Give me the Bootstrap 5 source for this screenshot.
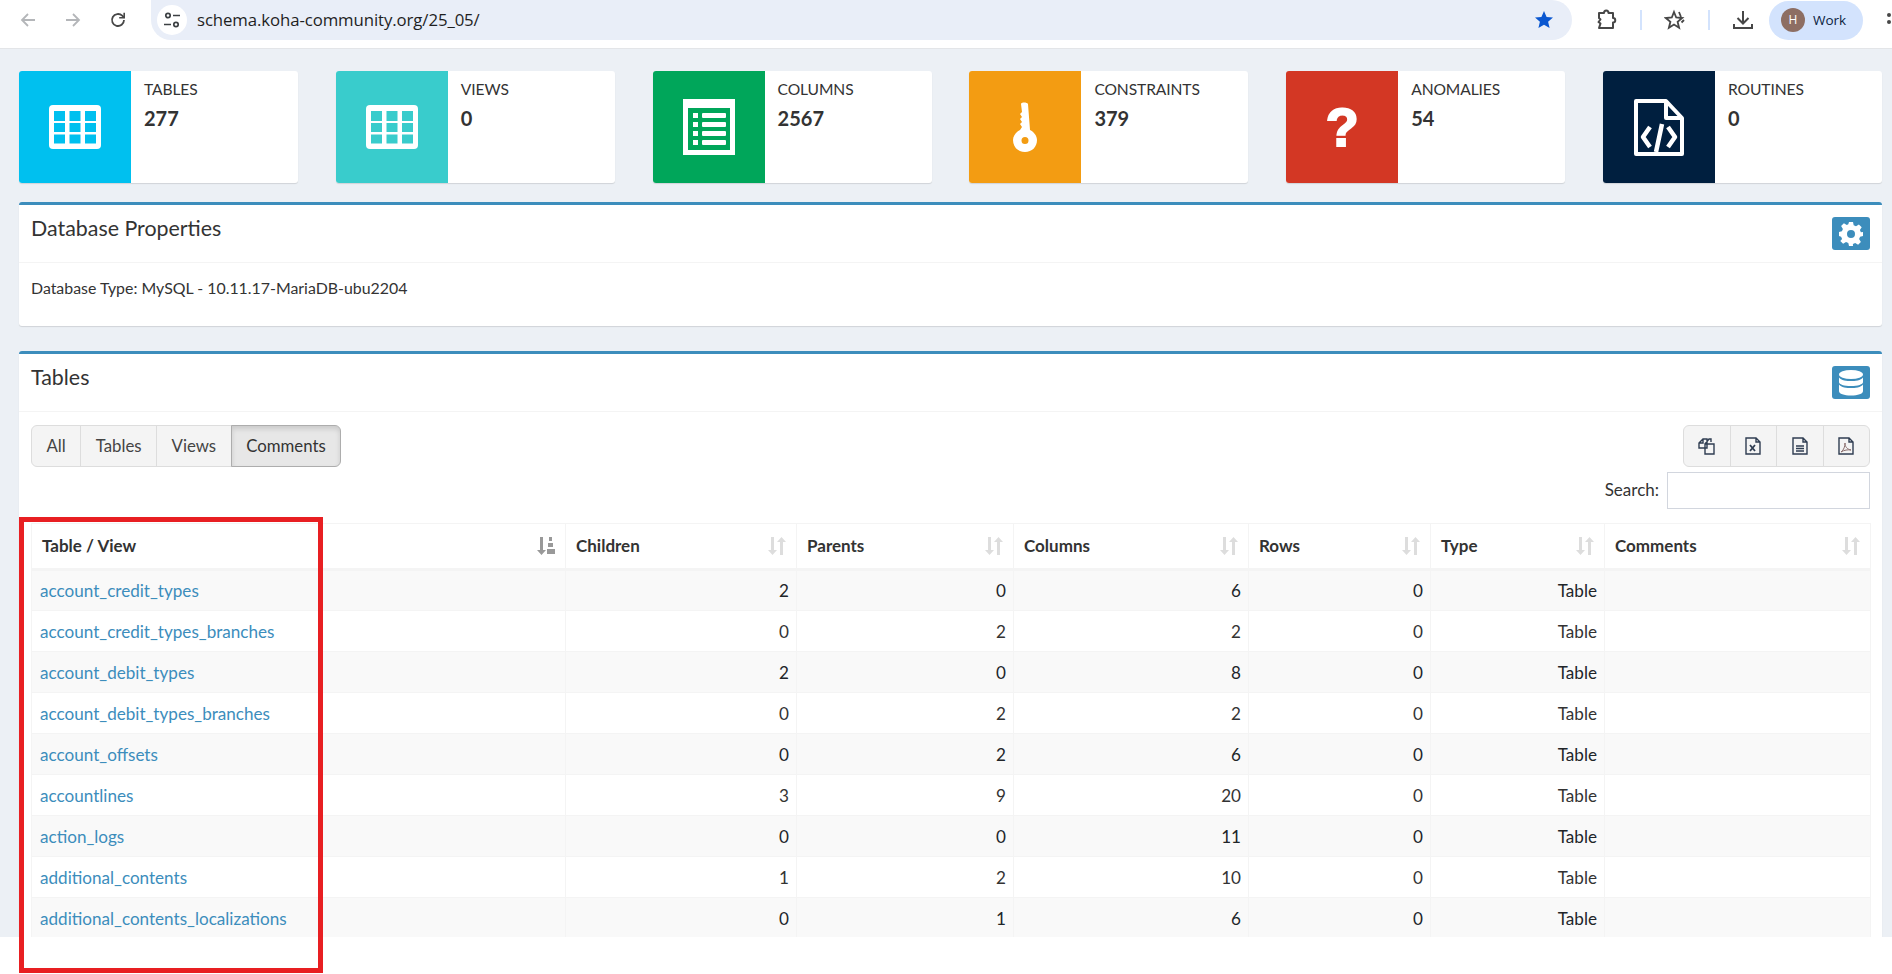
<!DOCTYPE html>
<html lang="en">
<head>
  <meta charset="UTF-8">
  <title>Schema</title>
  <link href="https://cdn.jsdelivr.net/npm/bootstrap@5.3.0/dist/css/bootstrap.min.css" rel="stylesheet">
  <style>
    html, body { height: 974px; overflow: hidden; background: #fff; }
    body { font-family: "Lato", "Liberation Sans", sans-serif; font-size: 17px; color: #333; position: relative; }
    /* browser chrome */
    .chrome-bar { height: 49px; background: #fff; border-bottom: 1px solid #e3e5e8; font-family: "Open Sans", sans-serif; }
    .chrome-nav { width: 151px; padding-left: 19px; gap: 27px; height: 40px; }
    .address-pill { width: 1421px; height: 40px; background: #e9eef8; border-radius: 0 20px 20px 20px; padding: 0 18px 0 6px; }
    .tune-circle { width: 30px; height: 30px; border-radius: 50%; background: #fff; }
    .address-text { margin-left: 10px; font-size: 16.8px; color: #1f1f1f; letter-spacing: -.1px; }
    .chrome-tools { height: 40px; }
    .tool-sep { width: 2px; height: 20px; background: #d3e3fd; }
    .profile-pill { width: 94px; height: 39px; border-radius: 20px; background: #d3e3fd; color: #0b1d3f; font-size: 13.5px; padding-left: 12px; gap: 8px; }
    .avatar-dot { width: 24px; height: 24px; border-radius: 50%; background: #8d6e63; color: #fff; font-size: 12px; }
    /* page */
    .page-wrap { height: 888px; overflow: hidden; background: #ecf0f5; padding: 22px 10px 0 19px; }
    .stat-box { width: 279px; height: 112px; background: #fff; border-radius: 3px; box-shadow: 0 1px 1px rgba(0,0,0,.12); overflow: hidden; }
    .stat-icon { width: 112px; height: 112px; flex: none; color: #fff; }
    .bg-tables { background: #00c0ef; }
    .bg-views { background: #39cccc; }
    .bg-columns { background: #00a65a; }
    .bg-constraints { background: #f39c12; }
    .bg-anomalies { background: #d33724; }
    .bg-routines { background: #001f3f; }
    .stat-text { padding: 8px 13px; }
    .stat-label { font-size: 15.6px; line-height: 20px; letter-spacing: -.1px; }
    .stat-num { font-size: 20px; font-weight: 700; line-height: 24px; margin-top: 7px; }
    .question-mark { font-family: "Liberation Sans", sans-serif; font-weight: 700; font-size: 54px; line-height: 1; -webkit-text-stroke: 2px #fff; }
    .panel-box { border: 0; border-top: 3px solid #3c8dbc; border-radius: 3px; box-shadow: 0 1px 1px rgba(0,0,0,.12); }
    .panel-box .card-header { background: #fff; height: 58px; border-bottom: 1px solid #f4f4f4; padding: 0 12px; }
    .panel-title { font-size: 21.4px; margin-top: -10px; }
    .tool-btn { width: 38px; height: 33px; background: #3c8dbc; border-radius: 3px; }
    .props-body { height: 63px; padding: 13px 12px; font-size: 15.9px; }
    .tables-body { padding: 13px 12px 0; }
    .dt-btn { height: 42px; background: #f4f4f4; border-color: #ddd; color: #444; font-size: 16.8px; padding: 0 14.5px; }
    .dt-btn.active, .dt-btn:hover { background: #e7e7e7 !important; border-color: #adadad !important; color: #333 !important; box-shadow: inset 0 3px 5px rgba(0,0,0,.125); }
    .dt-ico { width: 47.5px; padding: 0; }
    .search-label { margin-top: -2px; }
    .search-input { width: 203px; height: 37px; border: 1px solid #d2d6de; }
    .dt-table { table-layout: fixed; width: 1839px; margin-top: 14px; border: 1px solid #f4f4f4; --bs-table-striped-bg: #f9f9f9; --bs-table-border-color: #f4f4f4; font-size: 17.1px; color: #333; }
    .dt-table th { height: 46px; padding: 0 10px; font-size: 17px; font-weight: 700; vertical-align: middle; border-bottom: 3px solid #f4f4f4 !important; border-right: 1px solid #f4f4f4; }
    .dt-table td { height: 41px; padding: 1px 7px 0 8px; vertical-align: middle; border-right: 1px solid #f4f4f4; }
    .dt-table a { color: #3c8dbc; text-decoration: none; }
    /* red marker drawn over the screenshot */
    .red-marker { position: absolute; left: 19px; top: 517px; width: 304px; height: 456px; border: 5px solid #e81f22; pointer-events: none; }
  </style>
</head>
<body>
  <div class="chrome-bar d-flex">
    <div class="chrome-nav d-flex align-items-center flex-shrink-0">
      <svg width="18" height="18" viewBox="0 0 18 18" fill="none" stroke="#b4b6b9" stroke-width="1.8"><path d="M16 9H3M9 3 3 9l6 6"/></svg>
      <svg width="18" height="18" viewBox="0 0 18 18" fill="none" stroke="#b4b6b9" stroke-width="1.8"><path d="M2 9h13M9 3l6 6-6 6"/></svg>
      <svg width="18" height="18" viewBox="0 0 18 18" fill="none" stroke="#474747" stroke-width="1.8"><path d="M15 9a6 6 0 1 1-1.800-4.300L15 6.500"/><path d="M15.200 1.800v5h-5" stroke-width="1.600"/></svg>
    </div>
    <div class="address-pill d-flex align-items-center flex-shrink-0">
      <div class="tune-circle d-flex align-items-center justify-content-center">
        <svg width="18" height="18" viewBox="0 0 18 18" fill="none" stroke="#3c4043" stroke-width="1.700"><circle cx="5" cy="4.500" r="2.200"/><path d="M10 4.500h7M1 13.500h7"/><circle cx="13" cy="13.500" r="2.200"/></svg>
      </div>
      <span class="address-text">schema.koha-community.org/25_05/</span>
      <svg class="ms-auto" width="20" height="20" viewBox="0 0 20 20" fill="#0b57d0"><path d="M10 1l2.600 6 6.400.6-4.900 4.200 1.500 6.300L10 14.800l-5.600 3.300 1.500-6.300L1 7.600 7.400 7z"/></svg>
    </div>
    <div class="chrome-tools d-flex align-items-center flex-grow-1">
      <svg class="ms-4" width="22" height="22" viewBox="0 0 22 22" fill="none" stroke="#474747" stroke-width="2" stroke-linejoin="round"><path d="M3 4h5c0-3.500 4.500-3.500 4.500 0H17v5c3 0 3 4.500 0 4.500V19H3l1.500-4.500L2.500 13l2-2.500L3 9z"/></svg>
      <div class="tool-sep" style="margin-left:22px"></div>
      <svg style="margin-left:22px" width="22" height="22" viewBox="0 0 22 22" fill="none" stroke="#474747" stroke-width="1.800"><path d="M10 3l2.200 5.500 6 .5-4.600 3.800 1.500 6L10 15.500l-5.100 3.300 1.500-6L1.800 9l6-.5z"/><path d="M15 3l2 5M20 11l-2.500 2.500"/></svg>
      <div class="tool-sep" style="margin-left:22px"></div>
      <svg style="margin-left:22px" width="22" height="22" viewBox="0 0 22 22" fill="none" stroke="#474747" stroke-width="2"><path d="M11 2v12M5.500 9l5.500 5.500L16.500 9M2 15v4h18v-4"/></svg>
      <div class="profile-pill d-flex align-items-center flex-shrink-0" style="margin-left:15px">
        <span class="avatar-dot d-flex align-items-center justify-content-center">H</span><span>Work</span>
      </div>
      <svg style="margin-left:24px" width="4" height="20" viewBox="0 0 4 20" fill="#474747"><circle cx="2" cy="5" r="2"/><circle cx="2" cy="12" r="2"/></svg>
    </div>
  </div>

  <div class="page-wrap">
    <div class="d-flex justify-content-between">
      <div class="stat-box d-flex">
        <div class="stat-icon bg-tables d-flex align-items-center justify-content-center">
          <svg width="52" height="44" viewBox="0 0 52 44"><rect width="52" height="44" rx="4" fill="#fff"/><g fill="#00c0ef"><rect x="5" y="6" width="11" height="10"/><rect x="20.500" y="6" width="11" height="10"/><rect x="36" y="6" width="11" height="10"/><rect x="5" y="18" width="11" height="9"/><rect x="20.500" y="18" width="11" height="9"/><rect x="36" y="18" width="11" height="9"/><rect x="5" y="29.500" width="11" height="9"/><rect x="20.500" y="29.500" width="11" height="9"/><rect x="36" y="29.500" width="11" height="9"/></g></svg>
        </div>
        <div class="stat-text"><div class="stat-label">TABLES</div><div class="stat-num">277</div></div>
      </div>
      <div class="stat-box d-flex">
        <div class="stat-icon bg-views d-flex align-items-center justify-content-center">
          <svg width="52" height="44" viewBox="0 0 52 44"><rect width="52" height="44" rx="4" fill="#fff"/><g fill="#39cccc"><rect x="5" y="6" width="11" height="10"/><rect x="20.500" y="6" width="11" height="10"/><rect x="36" y="6" width="11" height="10"/><rect x="5" y="18" width="11" height="9"/><rect x="20.500" y="18" width="11" height="9"/><rect x="36" y="18" width="11" height="9"/><rect x="5" y="29.500" width="11" height="9"/><rect x="20.500" y="29.500" width="11" height="9"/><rect x="36" y="29.500" width="11" height="9"/></g></svg>
        </div>
        <div class="stat-text"><div class="stat-label">VIEWS</div><div class="stat-num">0</div></div>
      </div>
      <div class="stat-box d-flex">
        <div class="stat-icon bg-columns d-flex align-items-center justify-content-center">
          <svg width="52" height="56" viewBox="0 0 52 56"><rect width="52" height="56" fill="#fff"/><rect x="5" y="9" width="42" height="42" fill="#00a65a"/><g fill="#fff"><rect x="10" y="14" width="5" height="5"/><rect x="19" y="14" width="24" height="5" rx="1"/><rect x="10" y="23" width="5" height="5"/><rect x="19" y="23" width="24" height="5" rx="1"/><rect x="10" y="32" width="5" height="5"/><rect x="19" y="32" width="24" height="5" rx="1"/><rect x="10" y="41" width="5" height="5"/><rect x="19" y="41" width="24" height="5" rx="1"/></g></svg>
        </div>
        <div class="stat-text"><div class="stat-label">COLUMNS</div><div class="stat-num">2567</div></div>
      </div>
      <div class="stat-box d-flex">
        <div class="stat-icon bg-constraints d-flex align-items-center justify-content-center">
          <svg width="24" height="50" viewBox="0 0 24 50"><path fill="#fff" fill-rule="evenodd" d="M8 2c0-2 6-2 7 0l2 26c4 2 7 6 7 10 0 7-5 12-12 12S0 45 0 38c0-4 3-8 7-10l2-3-2-3 2-2-2-3 2-2-2-3 2-2zM12 35a3.500 3.500 0 1 0 0 7 3.500 3.500 0 0 0 0-7z"/></svg>
        </div>
        <div class="stat-text"><div class="stat-label">CONSTRAINTS</div><div class="stat-num">379</div></div>
      </div>
      <div class="stat-box d-flex">
        <div class="stat-icon bg-anomalies d-flex align-items-center justify-content-center">
          <span class="question-mark">?</span>
        </div>
        <div class="stat-text"><div class="stat-label">ANOMALIES</div><div class="stat-num">54</div></div>
      </div>
      <div class="stat-box d-flex">
        <div class="stat-icon bg-routines d-flex align-items-center justify-content-center">
          <svg width="50" height="57" viewBox="0 0 50 57" fill="none" stroke="#fff" stroke-width="4" stroke-linejoin="round"><path d="M2 2h30l16 17v36H2z"/><path d="M32 2v17h16"/><path d="M16 28l-7 10 7 10M34 28l7 10-7 10M28 25l-6 28" stroke-width="4.500"/></svg>
        </div>
        <div class="stat-text"><div class="stat-label">ROUTINES</div><div class="stat-num">0</div></div>
      </div>
    </div>

    <div class="card panel-box" style="margin-top:19px">
      <div class="card-header d-flex align-items-center justify-content-between">
        <div class="panel-title">Database Properties</div>
        <div class="tool-btn d-flex align-items-center justify-content-center">
          <svg width="24" height="24" viewBox="0 0 24 24" fill="#fff"><path fill-rule="evenodd" d="M10 0h4l.7 3.300 2.300 1 2.900-1.800 2.800 2.800L20.900 8l1 2.300L24 10v4l-2.900.7-1 2.300 1.800 2.900-2.800 2.800-2.900-1.800-2.300 1L14 24h-4l-.7-3.100-2.300-1-2.900 1.800-2.800-2.800L3.100 17l-1-2.300L0 14v-4l2.900-.7 1-2.300-1.800-2.900 2.800-2.800L7.800 3l1.500-.7zM12 8a4 4 0 1 0 0 8 4 4 0 0 0 0-8z"/></svg>
        </div>
      </div>
      <div class="card-body props-body">Database Type: MySQL - 10.11.17-MariaDB-ubu2204</div>
    </div>

    <div class="card panel-box" style="margin-top:25px">
      <div class="card-header d-flex align-items-center justify-content-between">
        <div class="panel-title">Tables</div>
        <div class="tool-btn d-flex align-items-center justify-content-center">
          <svg width="24" height="26" viewBox="0 0 24 26" fill="#fff"><ellipse cx="12" cy="4.500" rx="12" ry="4.500"/><path d="M0 7.500c2 3 8 3.500 12 3.500s10-.5 12-3.500V12c0 2.500-5 4-12 4S0 14.500 0 12zM0 14.500c2 3 8 3.500 12 3.500s10-.5 12-3.500V21c0 2.800-5 4.500-12 4.500S0 23.800 0 21z"/></svg>
        </div>
      </div>
      <div class="card-body tables-body">
        <div class="d-flex justify-content-between">
          <div class="btn-group">
            <button type="button" class="btn dt-btn">All</button>
            <button type="button" class="btn dt-btn">Tables</button>
            <button type="button" class="btn dt-btn">Views</button>
            <button type="button" class="btn dt-btn active">Comments</button>
          </div>
          <div class="btn-group">
            <button type="button" class="btn dt-btn dt-ico d-flex align-items-center justify-content-center"><svg width="18" height="18" viewBox="0 0 18 18" fill="none" stroke="#2f3d52" stroke-width="1.400"><path d="M1 6l4-4h4v9H1zM1 6h4V2M7 7l4-5h2v3M7 7h9v10H7z"/></svg></button>
            <button type="button" class="btn dt-btn dt-ico d-flex align-items-center justify-content-center"><svg width="16" height="18" viewBox="0 0 16 18" fill="none" stroke="#2f3d52" stroke-width="1.400"><path d="M1 1h10l4 4v12H1zM11 1v4h4"/><path d="M5 8l5 6M10 8l-5 6" stroke-width="1.800"/></svg></button>
            <button type="button" class="btn dt-btn dt-ico d-flex align-items-center justify-content-center"><svg width="16" height="18" viewBox="0 0 16 18" fill="none" stroke="#2f3d52" stroke-width="1.400"><path d="M1 1h10l4 4v12H1zM11 1v4h4M4 9h8M4 11.500h8M4 14h8"/></svg></button>
            <button type="button" class="btn dt-btn dt-ico d-flex align-items-center justify-content-center"><svg width="16" height="18" viewBox="0 0 16 18" fill="none" stroke="#2f3d52" stroke-width="1.400"><path d="M1 1h10l4 4v12H1zM11 1v4h4"/><path d="M3 15c3-2 4-6 4-9 0 4 2 6 6 7-3-.5-7 0-10 2z" stroke="#8a6d6d" stroke-width="1"/></svg></button>
          </div>
        </div>
        <div class="d-flex justify-content-end align-items-center gap-2" style="margin-top:5px">
          <label class="search-label" for="tblSearch">Search:</label>
          <input id="tblSearch" type="text" class="search-input">
        </div>
        <table class="table table-striped dt-table mb-0">
          <colgroup>
            <col style="width:534px"><col style="width:231px"><col style="width:217px"><col style="width:235px"><col style="width:182px"><col style="width:174px"><col style="width:266px">
          </colgroup>
          <thead>
            <tr id="headRow"></tr>
          </thead>
          <tbody id="tblRows"></tbody>
        </table>
      </div>
    </div>
  </div>

  <div class="red-marker"></div>

  <script>
    const headers = ['Table / View', 'Children', 'Parents', 'Columns', 'Rows', 'Type', 'Comments'];
    const rows = [
      ['account_credit_types', 2, 0, 6, 0],
      ['account_credit_types_branches', 0, 2, 2, 0],
      ['account_debit_types', 2, 0, 8, 0],
      ['account_debit_types_branches', 0, 2, 2, 0],
      ['account_offsets', 0, 2, 6, 0],
      ['accountlines', 3, 9, 20, 0],
      ['action_logs', 0, 0, 11, 0],
      ['additional_contents', 1, 2, 10, 0],
      ['additional_contents_localizations', 0, 1, 6, 0]
    ];
    // first column is the sorted one, the rest get the pale arrows
    const sortIcon = i => i === 0
      ? '<svg width="18" height="18" viewBox="0 0 18 18" fill="#999"><path d="M3 0h3v13h3l-4.500 5L0 13h3zM12 0h3v4h-3zM11 6h5v4h-5zM10 12h8v5h-8z"/></svg>'
      : '<svg width="18" height="18" viewBox="0 0 18 18" fill="#ddd"><path d="M3 0h3v13h3l-4.500 5L0 13h3zM12 18h3V5h3L13.500 0 9 5h3z"/></svg>';
    document.getElementById('headRow').innerHTML = headers.map((h, i) =>
      `<th><div class="d-flex justify-content-between align-items-center"><span>${h}</span>${sortIcon(i)}</div></th>`).join('');
    document.getElementById('tblRows').innerHTML = rows.map(r => `
      <tr>
        <td><a href="#">${r[0]}</a></td>
        <td class="text-end">${r[1]}</td>
        <td class="text-end">${r[2]}</td>
        <td class="text-end">${r[3]}</td>
        <td class="text-end">${r[4]}</td>
        <td class="text-end">Table</td>
        <td></td>
      </tr>`).join('');
  </script>
</body>
</html>
